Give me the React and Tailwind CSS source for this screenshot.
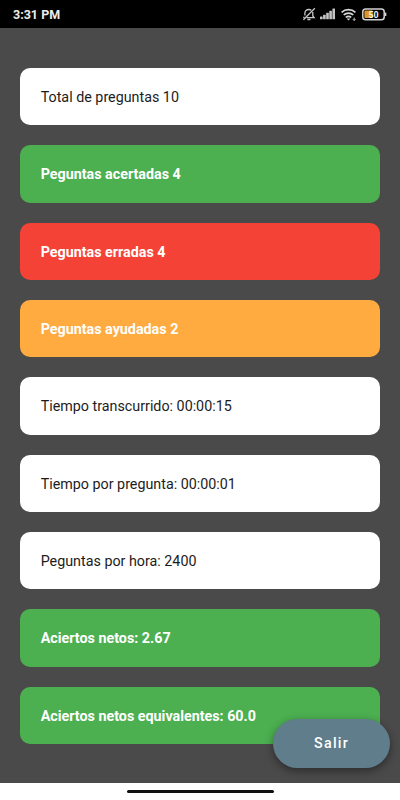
const stats = [
  { label: "Total de preguntas 10", tone: "plain" },
  { label: "Peguntas acertadas 4", tone: "green" },
  { label: "Peguntas erradas 4", tone: "red" },
  { label: "Peguntas ayudadas 2", tone: "orange" },
  { label: "Tiempo transcurrido: 00:00:15", tone: "plain" },
  { label: "Tiempo por pregunta: 00:00:01", tone: "plain" },
  { label: "Peguntas por hora: 2400", tone: "plain" },
  { label: "Aciertos netos: 2.67", tone: "green" },
  { label: "Aciertos netos equivalentes: 60.0", tone: "green" },
];

const tones = {
  plain: "bg-white text-[#1c1c1c]",
  green: "bg-[#4caf50] text-white font-bold",
  red: "bg-[#f44336] text-white font-bold",
  orange: "bg-[#ffab40] text-white font-bold",
};

function MutedBellIcon() {
  return (
    <svg width="14" height="14" viewBox="0 0 14 14" fill="none" stroke="#c8c8c8" strokeWidth="1.3">
      <path d="M2.9 8.6V6.2C2.9 3.9 4.5 2.5 6.8 2.5c1 0 1.8.2 2.5.7M10.8 5v4l1.3 1.6H4.6M5.4 12.5h3M1.2 10.4h1.4" />
      <path d="M12.8 1.2 1.4 12.8" />
    </svg>
  );
}

function SignalIcon() {
  return (
    <svg width="16" height="12" viewBox="0 0 16 12" fill="#c4c4c4">
      <rect x="0" y="8.4" width="2.6" height="2.9" rx="0.5" />
      <rect x="3.1" y="6.8" width="2.6" height="4.5" rx="0.5" />
      <rect x="6.2" y="4.8" width="2.6" height="6.5" rx="0.5" />
      <rect x="9.3" y="2.8" width="2.6" height="8.5" rx="0.5" />
      <rect x="12.4" y="0.6" width="2.6" height="10.7" rx="0.5" />
    </svg>
  );
}

function WifiIcon() {
  return (
    <svg width="16" height="13" viewBox="0 0 16 13" fill="none" stroke="#d8d8d8" strokeWidth="1.7">
      <path d="M0.6 4.3a10.4 10.4 0 0 1 13.8 0" />
      <path d="M2.7 6.9a7.2 7.2 0 0 1 9.6 0" />
      <path d="M4.8 9.4a4.2 4.2 0 0 1 5.4 0" />
      <path d="M5.7 10.6 7.5 12.5l1.8-1.9Z" fill="#d8d8d8" stroke="none" />
      <path d="M13.2 9.6v2.8M11.9 11.2l1.3 1.3 1.3-1.3" strokeWidth="0.9" />
    </svg>
  );
}

function BatteryIcon() {
  return (
    <svg width="25" height="13" viewBox="0 0 25 13">
      <rect x="0.8" y="0.9" width="21.4" height="10.8" rx="2.8" fill="none" stroke="#d2d2d2" strokeWidth="1.5" />
      <rect x="2.4" y="2.6" width="8.4" height="7.4" rx="1" fill="#d9962c" />
      <path d="M23.6 4.6v3.4" stroke="#cfcfcf" strokeWidth="1.5" />
      <text
        x="11.5"
        y="9.5"
        textAnchor="middle"
        fill="#f6f2e8"
        className="font-['Roboto',sans-serif] text-[8.8px] font-bold"
      >
        50
      </text>
    </svg>
  );
}

function StatusBar() {
  return (
    <header className="flex h-7 shrink-0 items-center justify-between bg-black pr-[13px] pl-[13px]">
      <span className="pt-[2px] text-[12.5px] leading-none font-bold text-[#ececec]">3:31 PM</span>
      <div className="flex items-center">
        <MutedBellIcon />
        <div className="ml-[4px]">
          <SignalIcon />
        </div>
        <div className="ml-[5px]">
          <WifiIcon />
        </div>
        <div className="ml-[5px]">
          <BatteryIcon />
        </div>
      </div>
    </header>
  );
}

export default function App() {
  return (
    <div className="relative flex h-[800px] w-[400px] flex-col overflow-hidden bg-white font-['Roboto',sans-serif]">
      <StatusBar />
      <main className="flex flex-1 flex-col gap-[20px] bg-[#4a4a4a] px-[20.3px] pt-[39.75px]">
        {stats.map((stat) => (
          <div
            key={stat.label}
            className={`flex h-[57.4px] shrink-0 items-center rounded-[10px] pt-[2px] pl-[20.4px] text-[14.3px] ${tones[stat.tone]}`}
          >
            {stat.label}
          </div>
        ))}
      </main>
      <footer className="flex h-[17px] shrink-0 justify-center bg-white pt-[7px]">
        <div className="h-[3px] w-[147px] rounded-full bg-[#111111]" />
      </footer>
      <button className="absolute right-[10px] bottom-[32.5px] flex h-[49px] w-[117px] items-center justify-center rounded-full bg-[#607d8b] pt-[2px] text-[14.3px] font-medium tracking-[1.25px] text-white shadow-[0_3px_8px_rgba(0,0,0,0.42)]">
        Salir
      </button>
    </div>
  );
}
